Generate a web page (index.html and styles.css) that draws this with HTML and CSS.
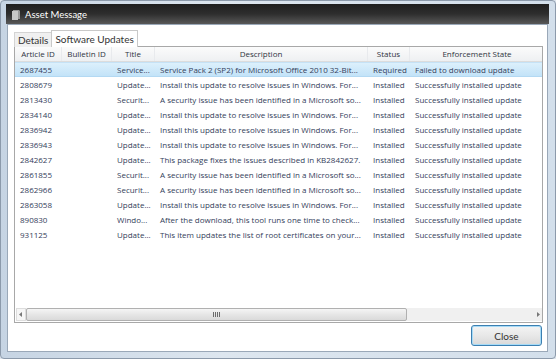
FILE: index.html
```html
<!DOCTYPE html>
<html>
<head>
<meta charset="utf-8">
<link rel="stylesheet" href="styles.css">
</head>
<body>
<div class="window">
  <div class="titlebar">
    <svg class="ticon" width="10" height="11" viewBox="0 0 10 11">
      <path d="M2 1 L8 1 L9 2 L9 10 L2 10 Z" fill="#9a9a9a"/>
      <path d="M1 2 L7 2 L7 11 L1 11 Z" fill="#c8c8c8"/>
    </svg>
    <span class="ttext">Asset Message</span>
  </div>
  <div class="client">
    <div class="tabs">
      <div class="tab">Details</div>
      <div class="tab sel">Software Updates</div>
    </div>
    <div class="grid">
      <div class="row head">
        <div class="c c1">Article ID</div>
        <div class="c c2">Bulletin ID</div>
        <div class="c c3">Title</div>
        <div class="c c4">Description</div>
        <div class="c c5">Status</div>
        <div class="c c6">Enforcement State</div>
      </div>
      <div class="body">
        <div class="row selrow"><div class="c c1">2687455</div><div class="c c2"></div><div class="c c3">Service...</div><div class="c c4">Service Pack 2 (SP2) for Microsoft Office 2010 32-Bit...</div><div class="c c5">Required</div><div class="c c6">Failed to download update</div></div>
        <div class="row"><div class="c c1">2808679</div><div class="c c2"></div><div class="c c3">Update...</div><div class="c c4">Install this update to resolve issues in Windows. For...</div><div class="c c5">Installed</div><div class="c c6">Successfully installed update</div></div>
        <div class="row"><div class="c c1">2813430</div><div class="c c2"></div><div class="c c3">Securit...</div><div class="c c4">A security issue has been identified in a Microsoft so...</div><div class="c c5">Installed</div><div class="c c6">Successfully installed update</div></div>
        <div class="row"><div class="c c1">2834140</div><div class="c c2"></div><div class="c c3">Update...</div><div class="c c4">Install this update to resolve issues in Windows. For...</div><div class="c c5">Installed</div><div class="c c6">Successfully installed update</div></div>
        <div class="row"><div class="c c1">2836942</div><div class="c c2"></div><div class="c c3">Update...</div><div class="c c4">Install this update to resolve issues in Windows. For...</div><div class="c c5">Installed</div><div class="c c6">Successfully installed update</div></div>
        <div class="row"><div class="c c1">2836943</div><div class="c c2"></div><div class="c c3">Update...</div><div class="c c4">Install this update to resolve issues in Windows. For...</div><div class="c c5">Installed</div><div class="c c6">Successfully installed update</div></div>
        <div class="row"><div class="c c1">2842627</div><div class="c c2"></div><div class="c c3">Update...</div><div class="c c4">This package fixes the issues described in KB2842627.</div><div class="c c5">Installed</div><div class="c c6">Successfully installed update</div></div>
        <div class="row"><div class="c c1">2861855</div><div class="c c2"></div><div class="c c3">Securit...</div><div class="c c4">A security issue has been identified in a Microsoft so...</div><div class="c c5">Installed</div><div class="c c6">Successfully installed update</div></div>
        <div class="row"><div class="c c1">2862966</div><div class="c c2"></div><div class="c c3">Securit...</div><div class="c c4">A security issue has been identified in a Microsoft so...</div><div class="c c5">Installed</div><div class="c c6">Successfully installed update</div></div>
        <div class="row"><div class="c c1">2863058</div><div class="c c2"></div><div class="c c3">Update...</div><div class="c c4">Install this update to resolve issues in Windows. For...</div><div class="c c5">Installed</div><div class="c c6">Successfully installed update</div></div>
        <div class="row"><div class="c c1">890830</div><div class="c c2"></div><div class="c c3">Windo...</div><div class="c c4">After the download, this tool runs one time to check...</div><div class="c c5">Installed</div><div class="c c6">Successfully installed update</div></div>
        <div class="row"><div class="c c1">931125</div><div class="c c2"></div><div class="c c3">Update...</div><div class="c c4">This item updates the list of root certificates on your...</div><div class="c c5">Installed</div><div class="c c6">Successfully installed update</div></div>
      </div>
      <div class="hscroll">
        <div class="arrow"><svg width="4" height="5" viewBox="0 0 4 5"><path d="M3 0 L0 2.5 L3 5 Z" fill="#777"/></svg></div>
        <div class="thumb"><span class="grip"></span></div>
        <div class="track"></div>
        <div class="arrow r"><svg width="4" height="5" viewBox="0 0 4 5"><path d="M1 0 L4 2.5 L1 5 Z" fill="#777"/></svg></div>
      </div>
    </div>
    <div class="footer">
      <button class="btn">Close</button>
    </div>
  </div>
</div>
</body>
</html>
```
FILE: styles.css
```css
* { box-sizing: border-box; }
html, body { margin: 0; padding: 0; }
body {
  width: 556px;
  height: 359px;
  overflow: hidden;
  background: #dfe6ee;
  font-family: "Open Sans", "Noto Sans", sans-serif;
}
.window {
  width: 556px;
  height: 359px;
  display: flex;
  flex-direction: column;
  padding: 3px 7px 6px 6px;
  background: linear-gradient(to right, #c6d4e3, #dde6ef 40%, #d3dfeb);
  border: 1px solid #8c9aab;
  border-radius: 4px;
}
.titlebar {
  height: 20px;
  flex: none;
  display: flex;
  align-items: center;
  gap: 4px;
  padding-left: 5px;
  margin: 0 -1px;
  background: linear-gradient(to bottom, #1f1f1f, #2e2e2e 50%, #585858);
  color: #ffffff;
  font-family: "Lato", "Open Sans", sans-serif;
  font-size: 9.5px;
}
.ticon { flex: none; }
.client {
  flex: 1;
  display: flex;
  flex-direction: column;
  background: #ffffff;
  border: 1px solid #9aa8b8;
  padding: 5px 4px 5px 6px;
}
.tabs {
  display: flex;
  align-items: flex-end;
  height: 17px;
  flex: none;
  position: relative;
  z-index: 1;
  margin-bottom: -1px;
}
.tab {
  font-family: "Lato", "Open Sans", sans-serif;
  font-size: 10px;
  color: #333;
  padding: 0 3px;
  height: 15px;
  line-height: 14px;
  background: #f0f0f0;
  border: 1px solid #d4d4d4;
  border-bottom: none;
  margin-right: -1px;
}
.tab.sel {
  background: #ffffff;
  height: 17px;
  line-height: 16px;
  padding: 0 3px;
  border-color: #c9c9c9;
  margin-right: 0;
}
.grid {
  height: 277px;
  flex: none;
  border: 1px solid #a8a8a8;
  display: flex;
  flex-direction: column;
  background: #ffffff;
}
.row {
  display: flex;
  height: 15px;
  flex: none;
  font-size: 8px;
  line-height: 15px;
  color: #34405a;
}
.row.head {
  background: linear-gradient(to bottom, #fbfbfb, #eef0f2);
  border-bottom: 1px solid #dcdcdc;
  color: #2f3440;
  height: 15px;
  line-height: 14px;
}
.head .c {
  text-align: center;
  padding: 0;
  border-right: 1px solid #e8eaed;
}
.head .c6 { border-right: none; }
.c {
  white-space: nowrap;
  overflow: hidden;
  padding-left: 5px;
  flex: none;
}
.c1 { width: 47px; }
.c2 { width: 50px; }
.c3 { width: 43px; }
.c4 { width: 213px; }
.c5 { width: 42px; }
.c6 { width: 134px; }
.selrow {
  background: linear-gradient(to bottom, #dcf0fc, #c3e3f8);
  border-top: 1px solid #c5e2f6;
  border-bottom: 1px solid #b3d9f3;
  line-height: 13px;
}
.body {
  flex: 1;
  display: flex;
  flex-direction: column;
}
.hscroll {
  height: 13px;
  flex: none;
  display: flex;
  margin: 0 0 1px 1px;
  background: #f0f0f0;
}
.arrow {
  width: 10px;
  flex: none;
  display: flex;
  align-items: center;
  justify-content: center;
  background: #f6f6f6;
  border: 1px solid #dddddd;
}
.arrow.r { width: 9px; background: #f0f0f0; border-color: transparent; }
.thumb {
  width: 381px;
  flex: none;
  border: 1px solid #b0b0b0;
  border-radius: 2px;
  background: linear-gradient(to bottom, #f5f5f5, #e6e6e6 50%, #dadada);
  display: flex;
  align-items: center;
  justify-content: center;
}
.grip {
  width: 7px;
  height: 5px;
  background: repeating-linear-gradient(to right, #6c6c6c 0 1px, transparent 1px 2px);
}
.track { flex: 1; }
.footer {
  flex: 1;
  display: flex;
  justify-content: flex-end;
  align-items: flex-end;
}
.btn {
  width: 71px;
  height: 21px;
  font-family: "Lato", "Open Sans", sans-serif;
  font-size: 10px;
  color: #333;
  background: linear-gradient(to bottom, #f4f4f4, #e8e8e8 50%, #d9d9d9);
  border: 1px solid #3c7fb1;
  border-radius: 3px;
  box-shadow: inset 0 0 0 1px #a6dbf7;
  padding: 0;
  margin-right: 1px;
}
```
